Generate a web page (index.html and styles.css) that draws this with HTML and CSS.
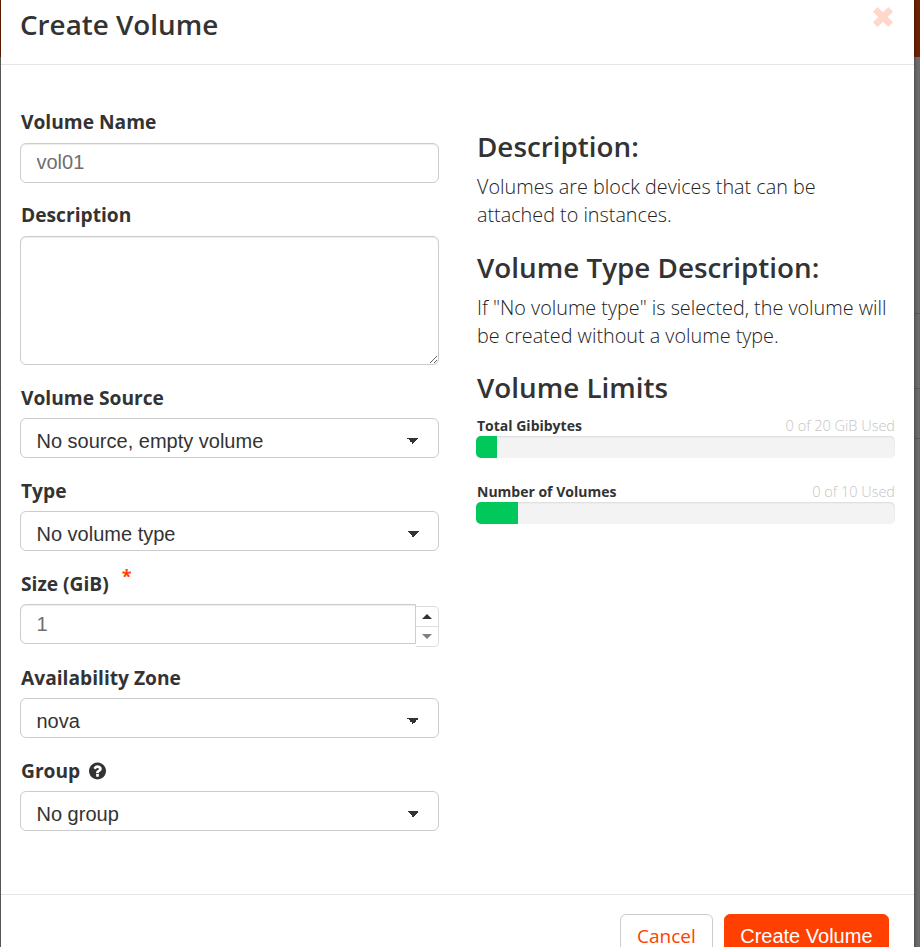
FILE: index.html
```html
<!DOCTYPE html>
<html lang="en">
<head>
    <meta charset="UTF-8">
    <meta name="viewport" content="width=device-width, initial-scale=1.0">
    <title>Create Volume</title>
    <link rel="stylesheet" href="styles.css">
</head>
<body>

    <div class="modal">
        <div class="modal-header">
            <h1>Create Volume</h1>
            <svg class="close-icon" viewBox="0 0 20 20" aria-label="Close">
                <path d="M3 3 L17 17 M17 3 L3 17"/>
            </svg>
        </div>

        <div class="modal-body">
            <form class="form-col">
                <div class="field">
                    <label for="volName">Volume Name</label>
                    <input class="control" type="text" id="volName" value="vol01">
                </div>
                <div class="field field-area">
                    <label for="volDesc">Description</label>
                    <textarea class="control" id="volDesc"></textarea>
                </div>
                <div class="field">
                    <label for="volSource">Volume Source</label>
                    <select class="control" id="volSource">
                        <option>No source, empty volume</option>
                    </select>
                </div>
                <div class="field">
                    <label for="volType">Type</label>
                    <select class="control" id="volType">
                        <option>No volume type</option>
                    </select>
                </div>
                <div class="field">
                    <label for="volSize">Size (GiB) <span class="required">*</span></label>
                    <div class="number-row">
                        <input class="control" type="text" id="volSize" value="1">
                        <div class="spinner">
                            <div class="spin-btn spin-up"><span class="arrow-up"></span></div>
                            <div class="spin-btn spin-down"><span class="arrow-down"></span></div>
                        </div>
                    </div>
                </div>
                <div class="field">
                    <label for="volZone">Availability Zone</label>
                    <select class="control" id="volZone">
                        <option>nova</option>
                    </select>
                </div>
                <div class="field">
                    <label for="volGroup">Group
                        <svg class="help-icon" viewBox="0 0 1536 1792">
                            <path d="M896 1376v-192q0-14-9-23t-23-9h-192q-14 0-23 9t-9 23v192q0 14 9 23t23 9h192q14 0 23-9t9-23zm256-672q0-88-55.500-163t-138.500-116-170-41q-243 0-371 213-15 24 8 42l132 100q7 6 19 6 16 0 25-12 53-68 86-92 34-24 86-24 48 0 85.500 26t37.500 59q0 38-20 61t-68 45q-63 28-115.500 86.500t-52.500 125.500v36q0 14 9 23t23 9h192q14 0 23-9t9-23q0-19 21.500-49.500t54.500-49.500q32-18 49-28.500t46-35 44.500-48 28-60.500 12.500-81zm384 192q0 209-103 385.500t-279.500 279.500-385.500 103-385.500-103-279.500-279.500-103-385.500 103-385.500 279.500-279.500 385.500-103 385.500 103 279.500 279.500 103 385.500z"/>
                        </svg>
                    </label>
                    <select class="control" id="volGroup">
                        <option>No group</option>
                    </select>
                </div>
            </form>

            <div class="info-col">
                <h3>Description:</h3>
                <p>Volumes are block devices that can be<br>attached to instances.</p>
                <h3>Volume Type Description:</h3>
                <p>If "No volume type" is selected, the volume will<br>be created without a volume type.</p>
                <h3>Volume Limits</h3>
                <div class="limit">
                    <div class="limit-head"><strong>Total Gibibytes</strong><span>0 of 20 GiB Used</span></div>
                    <div class="bar"><div class="bar-fill" style="width:5%"></div></div>
                </div>
                <div class="limit">
                    <div class="limit-head"><strong>Number of Volumes</strong><span>0 of 10 Used</span></div>
                    <div class="bar"><div class="bar-fill" style="width:10%"></div></div>
                </div>
            </div>
        </div>

        <div class="modal-footer">
            <button class="btn btn-cancel" type="button">Cancel</button>
            <button class="btn btn-primary" type="button">Create Volume</button>
        </div>
    </div>

</body>
</html>
```

FILE: styles.css
```css
html, body {
    height: 100%;
}
body {
    margin: 0;
    padding: 0 6px 0 1px;
    overflow: hidden;
    box-sizing: border-box;
    font-family: "Open Sans", "Noto Sans", sans-serif;
    color: #333;
    background: linear-gradient(#6f2200 57px, #6c6c6c 57px, #6c6c6c 313px, #5a5a5a 313px, #5a5a5a 314px, #6c6c6c 314px, #6c6c6c 388px, #5a5a5a 388px, #5a5a5a 389px, #6c6c6c 389px, #6c6c6c 438px, #5a5a5a 438px, #5a5a5a 439px, #6c6c6c 439px);
}
.modal {
    background: #fff;
    min-height: 100%;
    box-shadow: 0 0 4px rgba(0, 0, 0, 0.5);
}
.modal-header {
    display: flex;
    justify-content: space-between;
    height: 64px;
    padding: 0 20px 0 19px;
    border-bottom: 1px solid #e5e5e5;
}
.modal-header h1 {
    margin: 6px 0 0;
    font-size: 27.8px;
    line-height: 36px;
    font-weight: 600;
}
.close-icon {
    width: 22px;
    height: 22px;
    margin-top: 6px;
    fill: none;
    stroke: #ffd7cc;
    stroke-width: 6;
}
.modal-body {
    display: flex;
    gap: 37px;
    height: 830px;
    box-sizing: border-box;
    padding: 46px 19px 0 19px;
    border-bottom: 1px solid #e5e5e5;
}
.form-col {
    width: 419px;
    flex: none;
}
.info-col {
    width: 419px;
    flex: none;
    padding-top: 18px;
}
.field {
    margin-bottom: 21px;
}
.field-area,
.field-area ~ .field {
    margin-bottom: 22px;
}
.field label {
    display: block;
    height: 21px;
    padding-left: 1px;
    line-height: 22px;
    margin-bottom: 11px;
    font-size: 19.2px;
    font-weight: 700;
}
.field-area ~ .field label {
    margin-bottom: 10px;
}
.control {
    display: block;
    width: 100%;
    height: 40px;
    box-sizing: border-box;
    padding: 0 15.5px 2px;
    border: 1px solid #ccc;
    border-radius: 6px;
    background: #fff;
    font-family: "Liberation Sans", Arial, sans-serif;
    font-size: 20px;
    color: #333;
    box-shadow: inset 0 1px 1px rgba(0, 0, 0, 0.075);
}
input.control {
    color: #6f6f6f;
}
textarea.control {
    height: 129px;
}
select.control {
    appearance: none;
    padding: 5px 15.5px 0;
    background-image: linear-gradient(45deg, transparent 50%, #333 50%), linear-gradient(-45deg, transparent 50%, #333 50%);
    background-size: 6px 6px, 6px 6px;
    background-position: 386px 19px, 392px 19px;
    background-repeat: no-repeat;
    box-shadow: none;
}
.required {
    color: #ff4000;
    line-height: 0;
    vertical-align: 8px;
    margin-left: 8px;
    font-size: 18px;
}
.help-icon {
    width: 17px;
    height: 20px;
    margin-left: 4px;
    vertical-align: -3px;
    fill: #333;
}
.number-row {
    display: flex;
    align-items: flex-start;
    height: 41px;
}
.number-row .control {
    flex: 1;
    min-width: 0;
    padding-bottom: 0;
    border-radius: 6px 0 0 6px;
}
.spinner {
    width: 23px;
    flex: none;
    margin-top: 2px;
    box-sizing: border-box;
    border: 1px solid #ddd;
    border-left: none;
    border-radius: 0 5px 5px 0;
}
.spin-btn {
    height: 19px;
    display: flex;
    justify-content: center;
    align-items: center;
}
.spin-up {
    border-bottom: 1px solid #ddd;
}
.arrow-up {
    border-left: 5px solid transparent;
    border-right: 5px solid transparent;
    border-bottom: 5px solid #333;
}
.arrow-down {
    border-left: 5px solid transparent;
    border-right: 5px solid transparent;
    border-top: 5px solid #808080;
}
.info-col h3 {
    margin: 0 0 10px;
    padding-left: 1px;
    font-size: 27.8px;
    line-height: 34px;
    font-weight: 600;
}
.info-col p {
    margin: 0 0 20.5px;
    padding-left: 1px;
    font-size: 19.8px;
    line-height: 28px;
    font-weight: 300;
    color: #222;
}
.limit {
    margin-bottom: 24px;
}
h3 + .limit {
    margin-top: 12px;
}
.limit-head {
    display: flex;
    justify-content: space-between;
    padding-left: 1px;
    font-size: 14px;
    line-height: 20px;
}
.limit-head span {
    color: #c4c4c4;
    font-size: 14.5px;
    font-weight: 300;
}
.bar {
    height: 22px;
    border-radius: 5px;
    overflow: hidden;
    background: #f3f3f3;
    box-shadow: inset 0 1px 2px rgba(0, 0, 0, 0.1);
}
.bar-fill {
    height: 100%;
    background: #00c85a;
}
.modal-footer {
    display: flex;
    justify-content: flex-end;
    gap: 11px;
    padding: 19px 25px 0 0;
}
.btn {
    height: 44px;
    padding: 0 15.5px;
    border-radius: 6px;
    font-size: 20px;
}
.btn-cancel {
    padding: 0 16px;
    background: #fff;
    border: 1px solid #ccc;
    color: #ff4000;
    font-family: "Open Sans", sans-serif;
    font-size: 19px;
}
.btn-primary {
    background: #ff4000;
    border: 1px solid #ff4000;
    color: #fff;
    font-family: "Liberation Sans", Arial, sans-serif;
}
```
